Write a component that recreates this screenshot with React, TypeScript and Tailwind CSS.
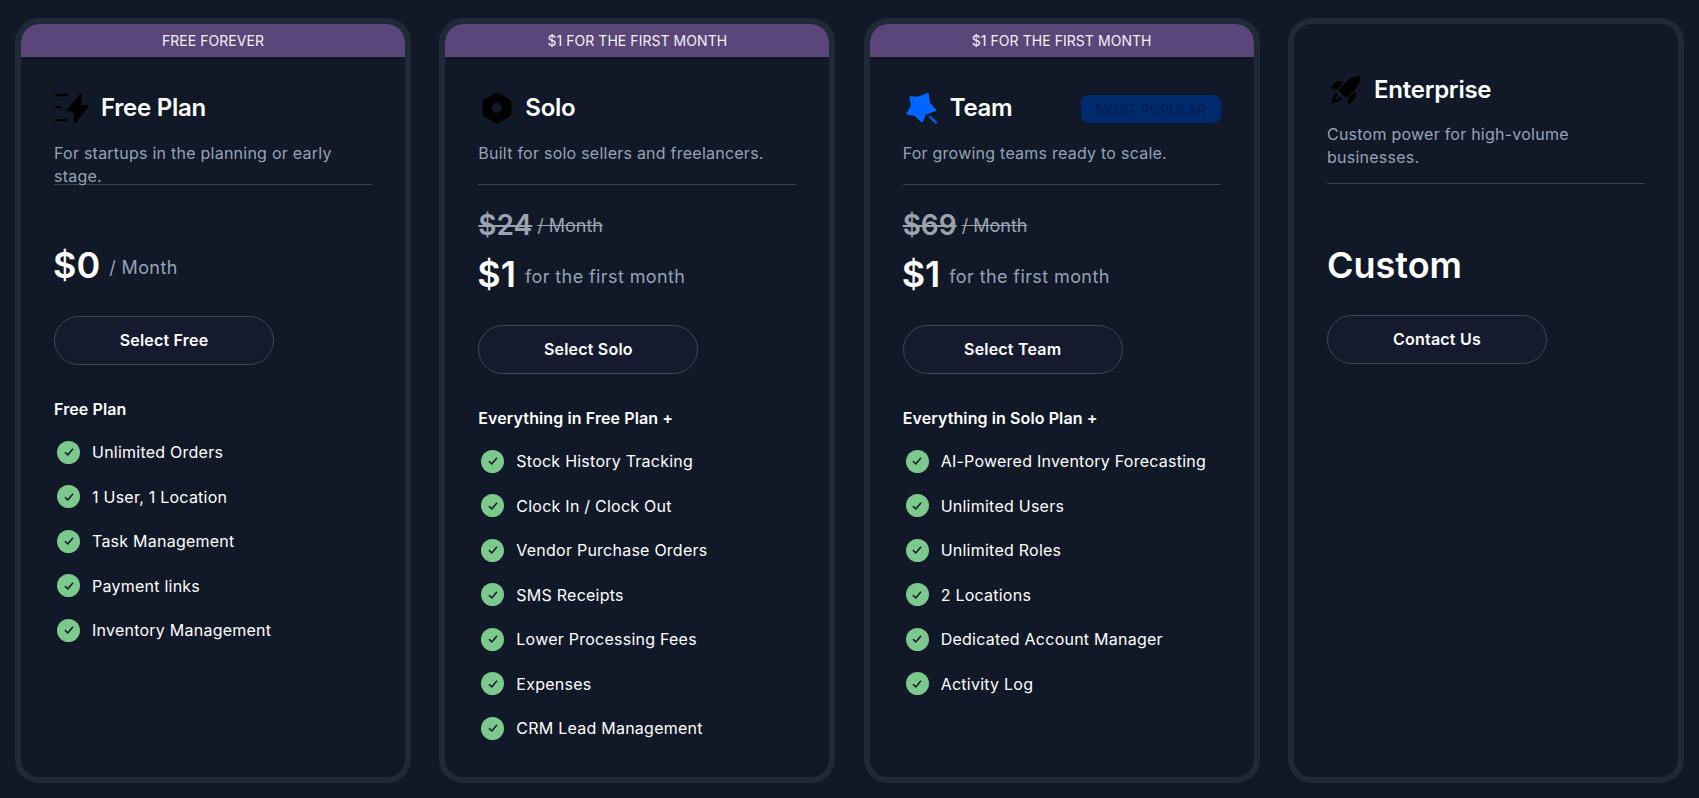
import type { ReactNode } from "react"

function BoltIcon() {
  return (
    <svg viewBox="0 0 34 30" className="ml-[1px] h-[30px] w-[34px] shrink-0" fill="#000">
      <rect x="0" y="1" width="13" height="2.2" rx="1.1" />
      <rect x="0" y="13" width="6.5" height="2.2" rx="1.1" />
      <rect x="0" y="26" width="12" height="2.2" rx="1.1" />
      <path d="M25.4 0.6 L12.2 16.4 Q11.4 18 13 18.2 L19 18.4 L19 28.8 Q19.6 30.4 21 29.2 L33.2 14 Q34 12.4 32.2 12 L26.2 12 L27 1.4 Q26.6 -0.4 25.4 0.6 Z" />
    </svg>
  )
}

function NutIcon() {
  return (
    <svg viewBox="0 0 32 34" className="ml-[4px] h-[32px] w-[30px] shrink-0">
      <path
        fillRule="evenodd"
        fill="#000"
        d="M14 1.2 Q16 0 18 1.2 L29.5 7.8 Q31.4 9 31.4 11 L31.4 23 Q31.4 25 29.5 26.2 L18 32.8 Q16 34 14 32.8 L2.5 26.2 Q0.6 25 0.6 23 L0.6 11 Q0.6 9 2.5 7.8 Z M16 11.6 A5.4 5.4 0 1 0 16 22.4 A5.4 5.4 0 1 0 16 11.6 Z"
      />
    </svg>
  )
}

function StarIcon() {
  return (
    <svg viewBox="0 0 32 32" className="ml-[3px] h-[32px] w-[32px] shrink-0">
      <path
        d="M21.5 2 L11.5 6 L4.5 5.5 L6.5 14 L1.5 21.5 L9 22.5 L16 29 L19 21.5 L29 18 L23 11.5 Z"
        fill="#0066ff"
        stroke="#0066ff"
        strokeWidth="2.4"
        strokeLinejoin="round"
      />
      <path d="M24 25 L30 30.6" stroke="#0066ff" strokeWidth="2.2" strokeLinecap="round" fill="none" />
    </svg>
  )
}

function RocketIcon() {
  return (
    <svg viewBox="0 0 31 30" className="ml-[3px] h-[30px] w-[31px] shrink-0" fill="#000">
      <path d="M30 1 Q29.8 9.5 25 14.5 L17.5 22 Q16 23.2 14.8 22 L9.5 16.5 Q8.5 15.2 9.5 14 L16.5 6.2 Q22 1.2 30 1 Z" />
      <path d="M11.5 6.2 L7.6 6 Q6.4 6 5.4 7 L1.5 11.4 Q0.4 13 2.2 13.6 L7 14.6 L13 7.6 Z" />
      <path d="M25.6 16.6 L25.8 21.6 Q25.8 23 24.6 24.2 L20 29 Q18.6 30 18.3 28.2 L17.4 23.6 Z" />
      <path d="M6 18 Q1.8 21 1.4 28.4 Q8.4 28.2 12 23.6 L10 21.6 Q8.2 24.4 5 25 Q5.2 22.2 8 19.8 Z" />
    </svg>
  )
}

function Check() {
  return (
    <span className="flex h-[23px] w-[23px] shrink-0 items-center justify-center rounded-full bg-[#7bc98c]">
      <svg viewBox="0 0 12 12" className="h-[12px] w-[12px]" fill="none" stroke="#111827" strokeWidth="1.5" strokeLinecap="round" strokeLinejoin="round">
        <path d="M2.4 6.6 L4.8 9 L9.6 3.2" />
      </svg>
    </span>
  )
}

type Plan = {
  name: string
  desc: string
  banner?: string
  icon: ReactNode
  badge?: boolean
  oldPrice?: string
  price: string
  priceNote?: string
  cta: string
  heading?: string
  features: string[]
}

const plans: Plan[] = [
  {
    name: "Free Plan",
    desc: "For startups in the planning or early stage.",
    banner: "FREE FOREVER",
    icon: <BoltIcon />,
    price: "$0",
    priceNote: "/ Month",
    cta: "Select Free",
    heading: "Free Plan",
    features: ["Unlimited Orders", "1 User, 1 Location", "Task Management", "Payment links", "Inventory Management"],
  },
  {
    name: "Solo",
    desc: "Built for solo sellers and freelancers.",
    banner: "$1 FOR THE FIRST MONTH",
    icon: <NutIcon />,
    oldPrice: "$24",
    price: "$1",
    priceNote: "for the first month",
    cta: "Select Solo",
    heading: "Everything in Free Plan +",
    features: [
      "Stock History Tracking",
      "Clock In / Clock Out",
      "Vendor Purchase Orders",
      "SMS Receipts",
      "Lower Processing Fees",
      "Expenses",
      "CRM Lead Management",
    ],
  },
  {
    name: "Team",
    desc: "For growing teams ready to scale.",
    banner: "$1 FOR THE FIRST MONTH",
    icon: <StarIcon />,
    badge: true,
    oldPrice: "$69",
    price: "$1",
    priceNote: "for the first month",
    cta: "Select Team",
    heading: "Everything in Solo Plan +",
    features: [
      "AI-Powered Inventory Forecasting",
      "Unlimited Users",
      "Unlimited Roles",
      "2 Locations",
      "Dedicated Account Manager",
      "Activity Log",
    ],
  },
  {
    name: "Enterprise",
    desc: "Custom power for high-volume businesses.",
    icon: <RocketIcon />,
    price: "Custom",
    cta: "Contact Us",
    features: [],
  },
]

function PlanCard({ plan }: { plan: Plan }) {
  return (
    <div className="h-[765px] overflow-hidden rounded-[24px] border-[6px] border-[#1f2937]">
      {plan.banner && (
        <div className="flex h-[33px] items-center justify-center rounded-t-[18px] bg-[#5b4679] text-[14px] tracking-[0.05px] text-[#f3f0fa]">
          {plan.banner}
        </div>
      )}
      <div className={plan.banner ? "px-[33px] pt-[33px]" : "px-[33px] pt-[48px]"}>
        <div className="flex h-[36px] items-center">
          <div className="flex w-[47px] shrink-0 items-center">{plan.icon}</div>
          <h2 className="text-[24px] font-semibold leading-[36px] tracking-[-0.25px] text-white">{plan.name}</h2>
          {plan.badge && (
            <span className="ml-auto mt-[2px] flex h-[28px] w-[140px] items-center justify-center rounded-[8px] bg-[#002a6e] text-[14px] text-[#001d4f]">
              MOST POPULAR
            </span>
          )}
        </div>
        <div className={plan.banner ? "mt-[16px] h-[43px] border-b border-[#374151]" : "mt-[15px] h-[61px] border-b border-[#374151]"}>
          <p className="text-[16px] leading-[23px] tracking-[0.24px] text-[#94a3b8]">{plan.desc}</p>
        </div>
        <div className={plan.oldPrice ? "flex h-[140px] flex-col" : "flex h-[131px] flex-col"}>
          {plan.oldPrice && (
            <div className="mt-[22px] flex h-[36px] items-center gap-[5px] text-[#9ca3af] line-through">
              <span className="text-[28px] font-semibold leading-[36px]">{plan.oldPrice}</span>
              <span className="text-[18px]">/ Month</span>
            </div>
          )}
          <div className={plan.oldPrice ? "mt-[13px] flex h-[36px] items-center" : plan.priceNote ? "mt-[62px] flex h-[36px] items-center" : "mt-[63px] flex h-[36px] items-center"}>
            <span className={plan.priceNote ? "-ml-[1px] text-[36px] font-semibold leading-[36px] text-white" : "text-[36px] font-semibold leading-[36px] text-white"}>
              {plan.price}
            </span>
            {plan.priceNote && (
              <span className="ml-[9px] mt-[5px] text-[18px] tracking-[0.4px] text-[#94a3b8]">{plan.priceNote}</span>
            )}
          </div>
        </div>
        <button className="flex h-[49px] w-[220px] items-center justify-center rounded-full border border-[#3f4654] bg-[#151a2e] pb-[2px] text-[16px] font-semibold tracking-[0.2px] text-white">
          {plan.cta}
        </button>
        {plan.heading && (
          <h3 className="mt-[32px] text-[16px] font-semibold leading-[24px] tracking-[0.1px] text-white">{plan.heading}</h3>
        )}
        {plan.features.length > 0 && (
          <ul className="mt-[19px] flex flex-col gap-[20.5px]">
            {plan.features.map((f) => (
              <li key={f} className="flex h-[24px] items-center gap-[12px] pl-[3px] text-[16px] tracking-[0.24px] text-white">
                <Check />
                <span>{f}</span>
              </li>
            ))}
          </ul>
        )}
      </div>
    </div>
  )
}

export default function App() {
  return (
    <div className="grid h-[798px] grid-cols-[repeat(4,396px)] gap-[28.33px] overflow-hidden bg-[#111827] px-[15px] pt-[18px] font-['Inter',sans-serif]">
      {plans.map((p) => (
        <PlanCard key={p.name} plan={p} />
      ))}
    </div>
  )
}
